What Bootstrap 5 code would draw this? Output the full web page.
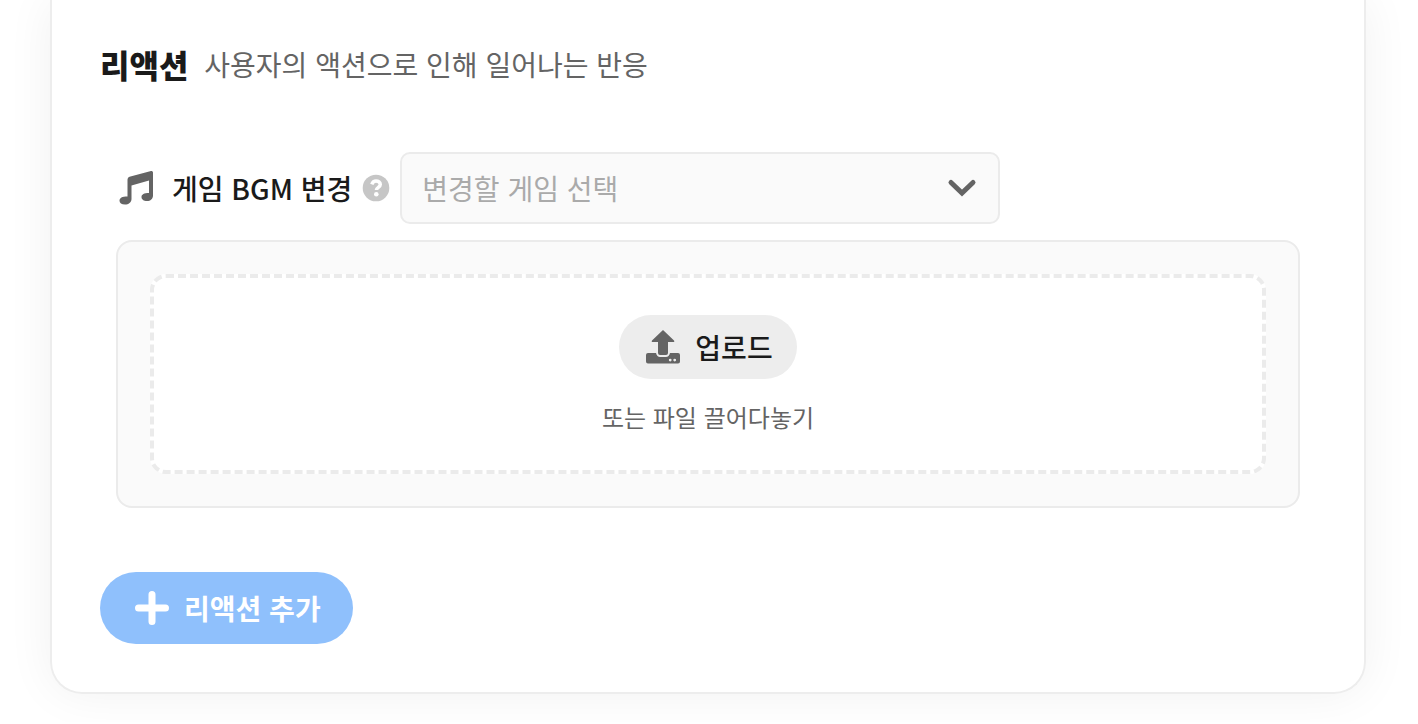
<!DOCTYPE html>
<html lang="ko">
<head>
<meta charset="utf-8">
<meta name="viewport" content="width=device-width, initial-scale=1">
<title>리액션</title>
<link href="https://cdn.jsdelivr.net/npm/bootstrap@5.3.0/dist/css/bootstrap.min.css" rel="stylesheet">
<style>
body { font-family: "Noto Sans CJK KR", sans-serif; font-size: 28px; line-height: 40px; color: #1a1a1a; background: #fff; overflow-x: hidden; }
.panel { margin: 0 52px 28px 50px; padding: 44px 48px 48px; border: 2px solid #ededed; border-top: 0; border-radius: 0 0 32px 32px; box-shadow: 0 0 48px rgba(0,0,0,.06); }
.panel-title { font-size: 32px; line-height: 40px; font-weight: 900; }
.soft { color: #646464; }
.reaction { margin-top: 68px; }
.label-text { font-size: 28px; font-weight: 500; }
.picker { position: relative; width: 600px; }
.picker .form-select { height: 72px; padding: 0 72px 0 20px; font-size: 28px; line-height: 40px; color: #aaa; background: #fafafa; border: 2px solid #ebebeb; border-radius: 10px; }
.picker svg { position: absolute; right: 26px; top: 24px; pointer-events: none; }
.upload { padding: 32px; background: #fafafa; border: 2px solid #ebebeb; border-radius: 16px; }
.dropzone { padding: 37px 0 35px; background: #fff; border: 4px dashed #ebebeb; border-radius: 16px; }
.btn-upload { height: 64px; padding: 0 24px; font-size: 28px; font-weight: 500; line-height: 40px; --bs-btn-bg: #ededed; --bs-btn-color: #1a1a1a; --bs-btn-hover-bg: #e2e2e2; border: 0; }
.hint { font-size: 24px; line-height: 36px; margin-top: 20px; }
.btn-add { height: 72px; padding: 0 32px; font-size: 28px; line-height: 40px; --bs-btn-bg: #8fc0fc; --bs-btn-color: #fff; --bs-btn-hover-bg: #7ab3fb; --bs-btn-hover-color: #fff; border: 0; margin-top: 64px; }
</style>
</head>
<body>
<main class="panel">
  <header class="d-flex align-items-center gap-3">
    <h2 class="panel-title mb-0">리액션</h2>
    <p class="soft mb-0">사용자의 액션으로 인해 일어나는 반응</p>
  </header>
  <section class="reaction px-3">
    <div class="d-flex align-items-center mb-3">
      <svg class="me-3" width="40" height="40" viewBox="0 0 40 40" fill="#646464" aria-hidden="true"><path d="M11.500 11.500Q11.500 9.500 13.500 8.800L35 3Q37 2.600 37 4.600V27.500C37 31 34.500 33 31 33C27.800 33 25.500 31.500 25.500 29C25.500 26.500 28 25 33 25V12.500L15.500 17.500V31C15.500 34.500 12.500 36.500 9 36.500C5.500 36.500 3.500 35 3.500 32.700C3.500 30 6 28.500 11.500 28.500Z"/></svg>
      <label class="label-text" for="bgm">게임 BGM 변경</label>
      <svg class="ms-2 me-2" width="32" height="32" viewBox="0 0 32 32" role="img" aria-label="도움말"><circle cx="16" cy="16" r="13.300" fill="#c6c6c6"/><path d="M11.800 12.300C12.800 9.700 14.200 9 16 9C18.400 9 20.300 10.300 20.300 12.500C20.300 15.300 16.400 15.300 16.400 18.100" fill="none" stroke="#fff" stroke-width="3.500"/><circle cx="16.300" cy="22.300" r="2.300" fill="#fff"/></svg>
      <div class="picker">
        <select class="form-select" id="bgm"><option>변경할 게임 선택</option></select>
        <svg width="24" height="24" viewBox="0 0 24 24" fill="none" stroke="#646464" stroke-width="5" stroke-linecap="round" overflow="visible" aria-hidden="true"><path d="M1 6.500L12 17L23 6.500"/></svg>
      </div>
    </div>
    <div class="upload">
      <div class="dropzone d-flex flex-column align-items-center">
        <button type="button" class="btn btn-upload rounded-pill d-flex align-items-center gap-2">
          <svg width="44" height="40" viewBox="0 0 44 40" fill="#646464" aria-hidden="true"><path d="M20 3L31 13.500Q32 15 30 15H25V26Q25 28 23 28H17Q15 28 15 26V15H10Q8 15 9 13.500Z"/><path fill-rule="evenodd" d="M5 26H13Q14 30 17 30H23Q26 30 27 26H35Q37 26 37 28V34.500Q37 36.500 35 36.500H5Q3 36.500 3 34.500V28Q3 26 5 26ZM27.200 31.700A1.400 1.400 0 1 0 27.200 34.500A1.400 1.400 0 1 0 27.200 31.700ZM31.700 31.700A1.400 1.400 0 1 0 31.700 34.500A1.400 1.400 0 1 0 31.700 31.700Z"/></svg>
          업로드
        </button>
        <p class="hint soft mb-0">또는 파일 끌어다놓기</p>
      </div>
    </div>
  </section>
  <button type="button" class="btn btn-add rounded-pill fw-bold d-flex align-items-center gap-2">
    <svg width="44" height="40" viewBox="0 0 44 40" stroke="#fff" stroke-width="7" stroke-linecap="round" aria-hidden="true"><path d="M20 6.500V33.500M6.500 20H33.500"/></svg>
    리액션 추가
  </button>
</main>
<script src="https://cdn.jsdelivr.net/npm/bootstrap@5.3.0/dist/js/bootstrap.bundle.min.js"></script>
</body>
</html>
